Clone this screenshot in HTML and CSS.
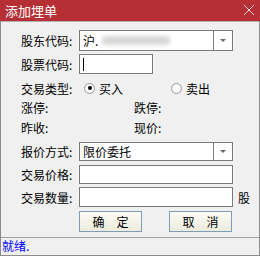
FILE: index.html
```html
<!DOCTYPE html>
<html lang="zh-CN">
<head>
    <meta charset="UTF-8">
    <title>添加埋单</title>
    <link rel="stylesheet" href="styles.css">
</head>
<body>
    <div class="window">
        <div class="titlebar">
            <span class="title">添加埋单</span>
            <svg class="close" width="12" height="12" viewBox="0 0 12 12">
                <path d="M1 1 L11 11 M11 1 L1 11" stroke="#f3d6d7" stroke-width="1" fill="none"/>
            </svg>
        </div>

        <div class="form">
            <div class="row row-account">
                <span class="label">股东代码:</span>
                <div class="select wide">
                    <span class="select-text">沪.<span class="blur"></span></span>
                    <span class="select-btn"><span class="arrow"></span></span>
                </div>
            </div>

            <div class="row row-code">
                <span class="label">股票代码:</span>
                <div class="input short"><span class="caret"></span></div>
            </div>

            <div class="row row-type">
                <span class="label">交易类型:</span>
                <label class="radio"><span class="dot checked"></span>买入</label>
                <label class="radio sell"><span class="dot"></span>卖出</label>
            </div>

            <div class="row row-info">
                <span class="label">涨停:</span>
                <span class="label right">跌停:</span>
            </div>

            <div class="row row-info2">
                <span class="label">昨收:</span>
                <span class="label right">现价:</span>
            </div>

            <div class="row row-mode">
                <span class="label">报价方式:</span>
                <div class="select wide">
                    <span class="select-text">限价委托</span>
                    <span class="select-btn"><span class="arrow"></span></span>
                </div>
            </div>

            <div class="row row-price">
                <span class="label">交易价格:</span>
                <div class="input wide"></div>
            </div>

            <div class="row row-qty">
                <span class="label">交易数量:</span>
                <div class="input wide"></div>
                <span class="unit">股</span>
            </div>

            <div class="row row-buttons">
                <button class="btn">确　定</button>
                <button class="btn">取　消</button>
            </div>
        </div>

        <div class="statusbar">就绪.</div>
    </div>
</body>
</html>
```

FILE: styles.css
```css
body {
    margin: 0;
    font-family: "Noto Sans CJK SC", "Liberation Sans", sans-serif;
    font-size: 12px;
    color: #000;
}

.window {
    width: 260px;
    height: 256px;
    box-sizing: border-box;
    background-color: #f0f0f0;
    border-left: 1px solid #8c8c8c;
    border-right: 1px solid #8c8c8c;
    border-bottom: 1px solid #8c8c8c;
    display: flex;
    flex-direction: column;
}

/* Title bar */
.titlebar {
    height: 21px;
    margin: 0 -1px;
    background-color: #b52f34;
    color: #fff;
    display: flex;
    align-items: center;
    justify-content: space-between;
    padding: 0 5px 0 5px;
}

.title {
    font-size: 13px;
}

.close {
    margin-top: -1px;
}

/* Form */
.form {
    flex: 1;
    padding-left: 20px;
    border-top: 1px solid #b0b0b0;
}

.row {
    display: flex;
    align-items: center;
}

.label {
    width: 58px;
    flex-shrink: 0;
}

.label.right {
    margin-left: 55px;
}

.row-account { margin-top: 8px; height: 21px; }
.row-code { margin-top: 3px; height: 20px; }
.row-type { margin-top: 4px; height: 20px; }
.row-info { height: 18px; }
.row-info2 { height: 22px; }
.row-mode { margin-top: 4px; height: 19px; }
.row-price { margin-top: 4px; height: 19px; }
.row-qty { margin-top: 3px; height: 20px; }
.row-buttons { margin-top: 4px; height: 21px; padding-left: 58px; gap: 27px; }

.select, .input {
    box-sizing: border-box;
    height: 100%;
    background-color: #fff;
    border: 1px solid #7a7a7a;
}

.wide { width: 154px; }
.short { width: 74px; }

.select {
    display: flex;
    align-items: center;
}

.select-text {
    flex: 1;
    padding-left: 3px;
    display: flex;
    align-items: center;
}

.blur {
    display: inline-block;
    width: 68px;
    height: 9px;
    margin-left: 4px;
    background-color: #d6d6d6;
    border-radius: 4px;
    filter: blur(2px);
}

.select-btn {
    width: 18px;
    height: 100%;
    border-left: 1px solid #7a7a7a;
    display: flex;
    align-items: center;
    justify-content: center;
}

.arrow {
    width: 0;
    height: 0;
    border-left: 3px solid transparent;
    border-right: 3px solid transparent;
    border-top: 3px solid #6a6a6a;
}

.input {
    display: flex;
    align-items: center;
}

.caret {
    width: 1px;
    height: 13px;
    margin-left: 3px;
    background-color: #000;
}

.unit {
    margin-left: 5px;
}

/* Radios */
.radio {
    display: flex;
    align-items: center;
    gap: 4px;
    margin-left: 5px;
}

.radio.sell {
    margin-left: 48px;
}

.dot {
    width: 11px;
    height: 11px;
    box-sizing: border-box;
    border-radius: 50%;
    border: 1px solid #9a9a9a;
    background: radial-gradient(circle, #fff 50%, #e4e4e4 100%);
    position: relative;
}

.dot.checked::after {
    content: "";
    position: absolute;
    left: 2.5px;
    top: 2.5px;
    width: 4px;
    height: 4px;
    border-radius: 50%;
    background-color: #000;
}

/* Buttons */
.btn {
    width: 63px;
    height: 21px;
    padding: 0;
    font-family: inherit;
    font-size: 12px;
    border: 1px solid #7f9db9;
    background: linear-gradient(#fcfcf7, #ecebdc);
}

/* Status bar */
.statusbar {
    height: 17px;
    border-top: 1px solid #a0a0a0;
    color: #0000ff;
    padding-left: 1px;
    line-height: 15px;
}
```
